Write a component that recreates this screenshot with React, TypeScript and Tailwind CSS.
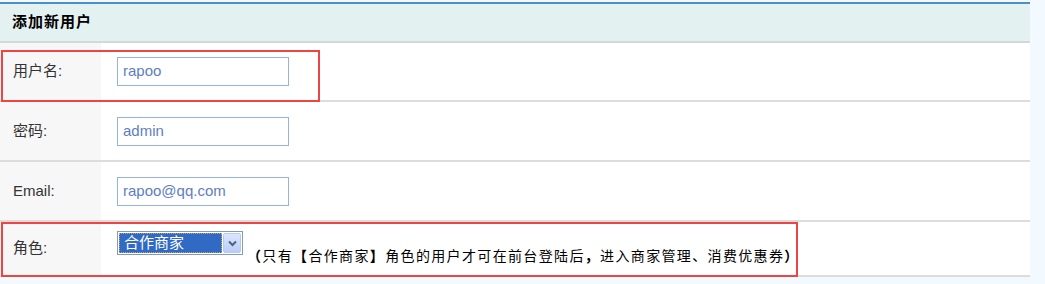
import React from "react";

const cjk = { fontFamily: '"Liberation Sans", "Noto Sans CJK SC", sans-serif' };

type RowProps = { label: string; height: string; children: React.ReactNode };

function FormRow({ label, height, children }: RowProps) {
  return (
    <div className={`flex border-b-2 border-[#dcdcdc] ${height}`}>
      <div className="w-[101px] shrink-0 bg-[#f7f7f7] flex items-center pl-[13px] text-[15px] text-[#333]">
        {label}
      </div>
      <div className="flex-1 bg-white flex items-center pl-[15px] border-l border-white">
        {children}
      </div>
    </div>
  );
}

function TextBox({ value }: { value: string }) {
  return (
    <div className="w-[172px] h-[29px] border border-[#94b4dc] bg-white flex items-center pl-[5px] text-[15px] text-[#5d80c2]">
      {value}
    </div>
  );
}

function RoleSelect() {
  return (
    <div className="w-[126px] h-[24px] border border-[#7f9db9] bg-white flex items-stretch p-[1px]">
      <div className="flex-1 bg-[#316ac5] border border-dotted border-[#c8a060] text-white text-[15px] leading-[18px] pl-[4px]">
        合作商家
      </div>
      <div className="w-[18px] ml-[1px] rounded-[2px] border border-[#b7c9f3] bg-gradient-to-b from-[#dbe6fe] to-[#b9cdf8] flex items-center justify-center">
        <svg width="9" height="7" viewBox="0 0 9 7">
          <path d="M1 1.5 L4.5 5 L8 1.5" fill="none" stroke="#4d6185" strokeWidth="2" />
        </svg>
      </div>
    </div>
  );
}

export default function App() {
  return (
    <div className="relative w-[1045px] h-[284px] bg-[#f3faff] overflow-hidden" style={cjk}>
      <div className="w-[1030px] mt-[2px] border-t-2 border-[#4a8fd0]">
        <div className="h-[39px] bg-[#e4f1f1] border-b-2 border-[#d4d8dc] flex items-center pl-[12px] text-[15px] font-bold tracking-[1px] text-black">
          添加新用户
        </div>
        <FormRow label="用户名:" height="h-[59px]">
          <TextBox value="rapoo" />
        </FormRow>
        <FormRow label="密码:" height="h-[60px]">
          <TextBox value="admin" />
        </FormRow>
        <FormRow label="Email:" height="h-[60px]">
          <TextBox value="rapoo@qq.com" />
        </FormRow>
        <FormRow label="角色:" height="h-[55px]">
          <div className="flex items-start">
            <RoleSelect />
            <div className="ml-[4px] pt-[15px] text-[14px] leading-[20px] tracking-[1.35px] text-black">
              <span className="font-bold">（</span>只有<span className="font-bold">【</span>合作商家<span className="font-bold">】</span>角色的用户才可在前台登陆后<span className="font-bold">，</span>进入商家管理、消费优惠券<span className="font-bold">）</span>
            </div>
          </div>
        </FormRow>
      </div>

      {/* red annotation boxes */}
      <div className="absolute left-[1px] top-[50px] w-[319px] h-[52px] border-2 border-[#ee4444] pointer-events-none" />
      <div className="absolute left-[1px] top-[222px] w-[797px] h-[55px] border-2 border-[#ee4444] pointer-events-none" />
    </div>
  );
}
